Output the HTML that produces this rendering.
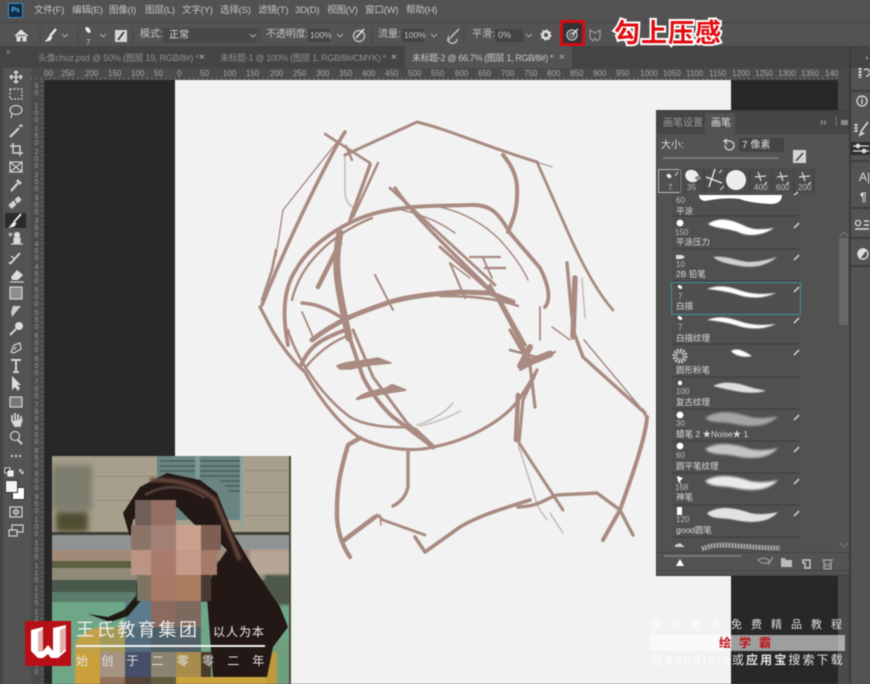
<!DOCTYPE html>
<html><head><meta charset="utf-8"><style>
html,body{margin:0;padding:0;background:#535353}
#p{position:relative;width:870px;height:684px;overflow:hidden;background:#535353;font-family:"Liberation Sans","Noto Sans CJK SC",sans-serif;color:#c4c4c4;font-size:10px;filter:blur(.4px)}
#p div,#p span.a,#p svg{position:absolute}
.t{position:absolute;white-space:nowrap;line-height:12px}
.m{position:absolute;white-space:nowrap;line-height:12px;top:5px;font-size:9.6px;letter-spacing:-.25px}
.tb{position:absolute;white-space:nowrap;line-height:12px;top:52px;font-size:9px}
.r{position:absolute;top:69px;font-size:8px;line-height:10px;color:#a8a8a8;white-space:nowrap}
.v{position:absolute;left:33px;width:7px;font-size:7px;line-height:7px;color:#a0a0a0;text-align:center}
.l{position:absolute;font-size:8.5px;line-height:12px;color:#dadada;white-space:nowrap}
.n{position:absolute;font-size:8px;line-height:9px;color:#bdbdbd;white-space:nowrap}
.it{position:absolute;left:672px;width:128px;background:#505050;border-bottom:2px solid #454545;box-sizing:border-box}
</style></head><body><div id="p">

<!-- chrome bars -->
<div style="left:0;top:0;width:870px;height:22px;background:#525252"></div>
<div style="left:0;top:22px;width:870px;height:1px;background:#444"></div>
<div style="left:0;top:46px;width:870px;height:22px;background:#444"></div>
<div style="left:405px;top:46px;width:167px;height:22px;background:#535353"></div>
<div style="left:31px;top:68px;width:807px;height:12px;background:#4b4b4b;background-image:repeating-linear-gradient(90deg,#6a6a6a 0 1px,transparent 1px 4.63px);background-size:100% 3px;background-repeat:no-repeat;background-position:0 9px"></div>
<div style="left:0;top:46px;width:3px;height:638px;background:#444"></div>
<div style="left:31px;top:80px;width:13px;height:604px;background:#4b4b4b;background-image:repeating-linear-gradient(0deg,#6a6a6a 0 1px,transparent 1px 4.63px);background-size:3px 100%;background-repeat:no-repeat;background-position:10px 0"></div>
<div style="left:44px;top:80px;width:131px;height:604px;background:#282828"></div>
<div style="left:731px;top:80px;width:107px;height:604px;background:#282828"></div>
<div style="left:175px;top:80px;width:556px;height:604px;background:#f2f2f2"></div>
<div style="left:838px;top:68px;width:12px;height:616px;background:#4a4a4a"></div>
<div style="left:849px;top:46px;width:2px;height:638px;background:#3a3a3a"></div>

<!-- menu -->
<div style="left:8px;top:3px;width:15px;height:15px;background:#0d2c44;border:1px solid #3e8fc4;box-sizing:border-box;color:#5fb6ec;font-size:7px;line-height:13px;text-align:center;font-weight:bold">Ps</div>
<span class="m" style="left:34px">文件(F)</span>
<span class="m" style="left:72px">编辑(E)</span>
<span class="m" style="left:109px">图像(I)</span>
<span class="m" style="left:145px">图层(L)</span>
<span class="m" style="left:182px">文字(Y)</span>
<span class="m" style="left:220px">选择(S)</span>
<span class="m" style="left:258px">滤镜(T)</span>
<span class="m" style="left:295px">3D(D)</span>
<span class="m" style="left:327px">视图(V)</span>
<span class="m" style="left:365px">窗口(W)</span>
<span class="m" style="left:406px">帮助(H)</span>

<!-- options -->
<div style="left:163px;top:28px;width:94px;height:15px;background:#484848"></div>
<div style="left:308px;top:29px;width:22px;height:13px;background:#444"></div>
<div style="left:402px;top:29px;width:22px;height:13px;background:#444"></div>
<div style="left:495px;top:29px;width:28px;height:13px;background:#444"></div>
<span class="t" style="left:140px;top:29px">模式:</span>
<span class="t" style="left:169px;top:30px;color:#ddd">正常</span>
<span class="t" style="left:266px;top:29px;letter-spacing:-.1px">不透明度:</span>
<span class="t" style="left:310px;top:29px;font-size:8.5px">100%</span>
<span class="t" style="left:378px;top:29px">流量:</span>
<span class="t" style="left:404px;top:29px;font-size:8.5px">100%</span>
<span class="t" style="left:472px;top:29px">平滑:</span>
<span class="t" style="left:498px;top:29px;font-size:9px">0%</span>
<span class="t" style="left:86px;top:37px;font-size:8px">7</span>
<div style="left:560px;top:20px;width:25px;height:26px;border:3px solid #d40c12;box-sizing:border-box;background:#333"></div>
<span class="t" style="left:614px;top:19px;font-size:26px;line-height:28px;font-weight:bold;color:#e00d12;-webkit-text-stroke:4px #fff;paint-order:stroke fill;letter-spacing:1px">勾上压感</span>

<svg style="left:0;top:0" width="870" height="50" fill="none" stroke="#c8c8c8" stroke-width="1">
<path d="M15 36 21 30 28 36M17 35V41H20V37H23V41H26V35" fill="#ddd" stroke="#ddd"/>
<path d="M40 27V44M78 27V44M133 27V44M260 27V44M372 27V44M464 27V44" stroke="#454545"/>
<path d="M56 29 50 36" stroke="#eee" stroke-width="2.4"/><path d="M50 36 46 41 50 40 52 37" fill="#eee" stroke="#eee"/>
<path d="M62 34 65 37 68 34M100 34 103 37 106 34M250 34 253 37 256 34M337 34 340 37 343 34M431 34 434 37 437 34M526 34 529 37 532 34" stroke="#aaa"/>
<ellipse cx="88" cy="30" rx="2" ry="3.4" fill="#eee" stroke="none" transform="rotate(-40 88 30)"/>
<rect x="115" y="30" width="12" height="12" fill="#d6d6d6" stroke="none"/><path d="M124 32 118 40" stroke="#333" stroke-width="1.6"/>
<circle cx="359" cy="36" r="5.5" stroke="#bbb" stroke-width="1.4"/><path d="M356 38 364 29" stroke="#eee" stroke-width="1.4"/>
<path d="M449 36A4.5 4.5 0 1 0 457 39M451 37 459 29" stroke="#ccc" stroke-width="1.3"/><path d="M447 41 452 37" stroke="#ccc"/>
<circle cx="546" cy="35" r="3.4" stroke="#e2e2e2" stroke-width="2.4"/><circle cx="546" cy="35" r="5" stroke="#e2e2e2" stroke-width="1" stroke-dasharray="2 1.9"/>
<circle cx="572" cy="35" r="5" stroke="#d0d0d0" stroke-width="1.2"/><circle cx="572" cy="35" r="2.4" stroke="#d0d0d0"/><path d="M572 35 578 29" stroke="#fff" stroke-width="1.2"/>
<path d="M595 33 590 30V38L593 41 595 38 597 41 600 38V30Z" stroke="#aaa"/>
</svg>

<!-- tabs -->
<span class="t" style="left:6px;top:46px;font-size:8px;color:#aaa">»</span>
<span class="tb" style="left:38px;color:#8f8f8f;letter-spacing:-.22px">头像chuz.psd @ 50% (图层 19, RGB/8#) *</span>
<span class="t" style="left:199px;top:52px;color:#c4c4c4">×</span>
<span class="tb" style="left:220px;color:#8f8f8f;letter-spacing:-.35px">未标题-1 @ 100% (图层 1, RGB/8#/CMYK) *</span>
<span class="t" style="left:391px;top:52px;color:#c4c4c4">×</span>
<span class="tb" style="left:412px;color:#c8c8c8;letter-spacing:-.35px">未标题-2 @ 66.7% (图层 1, RGB/8#) *</span>
<span class="t" style="left:559px;top:52px;color:#bbb">×</span>

<!-- top ruler -->
<span class="r" style="left:44px">00</span><span class="r" style="left:61px">250</span><span class="r" style="left:85px">200</span><span class="r" style="left:108px">150</span><span class="r" style="left:131px">100</span><span class="r" style="left:154px">50</span><span class="r" style="left:177px">0</span><span class="r" style="left:200px">50</span><span class="r" style="left:223px">100</span><span class="r" style="left:246px">150</span><span class="r" style="left:270px">200</span><span class="r" style="left:293px">250</span><span class="r" style="left:316px">300</span><span class="r" style="left:339px">350</span><span class="r" style="left:362px">400</span><span class="r" style="left:385px">450</span><span class="r" style="left:408px">500</span><span class="r" style="left:431px">550</span><span class="r" style="left:455px">600</span><span class="r" style="left:478px">650</span><span class="r" style="left:501px">700</span><span class="r" style="left:524px">750</span><span class="r" style="left:547px">800</span><span class="r" style="left:570px">850</span><span class="r" style="left:593px">900</span><span class="r" style="left:616px">950</span><span class="r" style="left:640px">1000</span><span class="r" style="left:663px">1050</span><span class="r" style="left:686px">1100</span><span class="r" style="left:709px">1150</span><span class="r" style="left:732px">1200</span><span class="r" style="left:755px">1250</span><span class="r" style="left:778px">1300</span><span class="r" style="left:801px">1350</span><span class="r" style="left:825px">140</span>

<!-- left ruler -->
<span class="v" style="top:83px">5<br>0</span><span class="v" style="top:103px">1<br>0<br>0</span><span class="v" style="top:126px">1<br>5<br>0</span><span class="v" style="top:149px">2<br>0<br>0</span><span class="v" style="top:172px">2<br>5<br>0</span><span class="v" style="top:195px">3<br>0<br>0</span><span class="v" style="top:218px">3<br>5<br>0</span><span class="v" style="top:241px">4<br>0<br>0</span><span class="v" style="top:264px">4<br>5<br>0</span><span class="v" style="top:287px">5<br>0<br>0</span><span class="v" style="top:310px">5<br>5<br>0</span><span class="v" style="top:333px">6<br>0<br>0</span><span class="v" style="top:356px">6<br>5<br>0</span><span class="v" style="top:379px">7<br>0<br>0</span><span class="v" style="top:402px">7<br>5<br>0</span><span class="v" style="top:425px">8<br>0<br>0</span><span class="v" style="top:448px">8<br>5<br>0</span><span class="v" style="top:471px">9<br>0<br>0</span><span class="v" style="top:494px">9<br>5<br>0</span><span class="v" style="top:517px">1<br>0<br>0</span><span class="v" style="top:540px">1<br>0<br>5</span><span class="v" style="top:563px">1<br>1<br>0</span><span class="v" style="top:586px">1<br>1<br>5</span><span class="v" style="top:609px">1<br>2<br>0</span><span class="v" style="top:632px">1<br>2<br>5</span><span class="v" style="top:655px">1<br>3<br>0</span>

<!-- tools -->
<div style="left:5px;top:213px;width:21px;height:15px;background:#2b2b2b"></div>
<svg style="left:0;top:60px" width="31" height="490" viewBox="0 60 31 490" fill="none" stroke="#d4d4d4" stroke-width="1.2">
<path d="M16 71V83M10 77H22M16 71 14 73M16 71 18 73M16 83 14 81M16 83 18 81M10 77 12 75M10 77 12 79M22 77 20 75M22 77 20 79" stroke-width="1.6"/>
<rect x="10" y="89" width="12" height="10" stroke-dasharray="2 1.5"/>
<ellipse cx="16" cy="110" rx="6" ry="4.5"/><path d="M12 114 11 118"/>
<path d="M10 137 19 128" stroke-width="2.2"/><path d="M21 124V127M19 126H23" />
<path d="M13 143V153H23M10 146H20V156" stroke-width="1.5"/>
<rect x="10" y="162" width="12" height="10"/><path d="M10 162 22 172M22 162 10 172"/>
<path d="M11 191 18 183" stroke-width="2.2"/><path d="M17 180 21 184" stroke-width="2.6"/>
<path d="M10 207 20 198" stroke-width="5"/><path d="M13 198 18 206" stroke="#555"/>
<path d="M21 214 14 222" stroke="#eee" stroke-width="1.8"/><path d="M14 222 10 227 14 226 16 223" fill="#eee" stroke="#eee"/>
<circle cx="17" cy="235" r="2.5" fill="#ddd"/><path d="M14 243H20V238H14ZM11 244H23" fill="#ddd"/><path d="M9 233 12 236M12 233 9 236"/>
<path d="M10 264 20 253" stroke-width="2"/><path d="M11 256 15 259M9 262 10 264" />
<path d="M11 277 17 270 23 275 18 280H12Z" fill="#ddd" stroke="none"/><path d="M10 282H24"/>
<rect x="10" y="287" width="12" height="12" fill="#8f8f8f"/>
<path d="M12 317 21 306 13 306 11 312Z" fill="#ccc" stroke="none"/>
<circle cx="19" cy="326" r="4" fill="#ddd" stroke="none"/><path d="M16 329 10 335" stroke-width="2"/>
<path d="M11 352 14 345 20 343 21 349 14 353ZM16 347 14 350"/>
<path d="M11 360H21M16 360V372M13 372H19" stroke-width="2"/>
<path d="M12 376V390L15 387 18 391 20 388 17 385H21Z" fill="#ddd" stroke="none"/>
<rect x="10" y="397" width="12" height="10" fill="#777"/>
<path d="M12 421V415M15 420V413M18 420V414M21 421V416M12 421 15 426H20L22 419" stroke-width="1.8" fill="#ddd"/>
<circle cx="15" cy="436" r="4.5"/><path d="M18 440 22 444" stroke-width="2"/>
<path d="M11 456H13M15 456H17M19 456H21" stroke-width="2"/>
<rect x="5" y="468" width="5" height="5" fill="#222" stroke="#ccc"/><rect x="8" y="471" width="5" height="5" fill="#eee" stroke="#eee"/>
<path d="M19 470 23 474M19 470H22M23 474V471"/>
<rect x="10" y="507" width="12" height="10"/><circle cx="16" cy="512" r="2.4" fill="#888"/>
<rect x="12" y="525" width="11" height="7"/><rect x="9" y="530" width="8" height="6" fill="#535353"/>
</svg>
<div style="left:12px;top:487px;width:13px;height:13px;background:#fff;border:1px solid #333;box-sizing:border-box"></div>
<div style="left:5px;top:480px;width:13px;height:13px;background:#f4f4f4;border:1px solid #333;box-sizing:border-box"></div>

<!-- sketch -->
<svg style="left:175px;top:80px" width="556" height="604" viewBox="175 80 556 604" fill="none" stroke="#a98b81" stroke-width="3" stroke-linecap="round" stroke-linejoin="round">
<g stroke="#c2bcb9" stroke-width="1.5">
<path d="M345 156V193Q346 204 353 207"/><path d="M582 278 585 318"/>
<path d="M520 450 538 507 547 520M550 513 563 533M517 400 519 450"/>
<path d="M417 425Q440 418 453 403M420 426Q445 420 460 411"/>
</g>
<path d="M345 132C330 155 290 235 262 305" stroke-width="3.6"/>
<path d="M345 132 283 210 276 256" stroke-width="1.4"/><path d="M276 250 272 270 262 300" stroke-width="2.6"/>
<path d="M325 134 370 163" stroke-width="2.6"/>
<path d="M345 155 417 122C450 130 490 148 537 162" stroke-width="3"/><path d="M537 162 552 167" stroke-width="1"/>
<path d="M346 146 352 160" stroke-width="2.4"/>
<path d="M378 163 353 217" stroke-width="2.6"/><path d="M370 165 350 220" stroke-width="3.4"/>
<path d="M503 155C514 168 518 180 517 195 517 212 512 222 508 232" stroke-width="4"/>
<path d="M537 162 567 230C578 255 595 290 613 310" stroke-width="2.8"/>
<path d="M260 307 272 330C285 352 297 365 305 372 320 400 340 425 360 438 385 450 415 452 433 447 470 440 505 420 520 398 528 385 535 375 537 370" stroke-width="3.2"/>
<path d="M288 345C281 310 285 285 297 268 310 245 345 220 380 212 410 205 440 206 470 205 490 204 498 212 510 233L540 268C549 285 551 300 545 307" stroke-width="3.8"/>
<path d="M292 300C300 265 330 235 372 218" stroke-width="2.4"/>
<path d="M288 330C295 355 320 395 350 417 365 426 390 428 412 427" stroke-width="2.6"/>
<path d="M300 367C310 345 320 340 345 330" stroke-width="4"/><path d="M305 368C320 350 335 340 350 335" stroke-width="2.4"/>
<path d="M312 340C340 318 367 310 390 302 410 296 440 293 460 292L490 293 513 302" stroke-width="5"/>
<path d="M440 296C470 296 495 298 518 306" stroke-width="2.4"/>
<path d="M302 303C318 304 330 310 342 318" stroke-width="3.4"/><path d="M318 287 340 243" stroke-width="4.6"/>
<path d="M340 233C333 265 339 290 343 310L349 338" stroke-width="7"/>
<path d="M347 330 363 377C372 395 385 410 393 417L433 447" stroke-width="4"/><path d="M353 330 373 377 407 423 433 446" stroke-width="3"/>
<path d="M415 430 433 447" stroke-width="5"/>
<path d="M337 366Q345 362 360 361L378 358 391 363 370 365 350 369 340 369Z" fill="#a98b81" stroke-width="1.6"/>
<path d="M357 399Q365 392 385 389L392 385 405 390 385 393 370 396Z" fill="#a98b81" stroke-width="2.4"/>
<path d="M390 188 495 285" stroke-width="2.8"/><path d="M395 188C420 225 470 268 500 300L525 345" stroke-width="3.4"/><path d="M440 247 500 300 520 340" stroke-width="3"/><path d="M490 285 530 360" stroke-width="3"/>
<path d="M510 330 530 365 535 407" stroke-width="3.2"/>
<path d="M525 364 550 354" stroke-width="7"/><path d="M530 347 520 366" stroke-width="6"/><path d="M520 370 555 352" stroke-width="2.2"/><path d="M510 350 540 358" stroke-width="2.6"/>
<path d="M567 263 572 317" stroke-width="3.4"/><path d="M575 278 573 337" stroke-width="5.5"/><path d="M573 330 583 357 645 413" stroke-width="3.4"/>
<path d="M535 375 523 400 519 443 563 510" stroke-width="3"/><path d="M518 395 516 440" stroke-width="4.6"/>
<path d="M647 417C646 440 625 495 620 510L603 540" stroke-width="4"/><path d="M643 410 647 418" stroke-width="3"/>
<path d="M518 507C540 506 545 499 557 495L597 493 620 510 633 535" stroke-width="3.4"/>
<path d="M360 438 348 445C339 475 337 490 337 510 336 530 343 547 350 557" stroke-width="4.4"/>
<path d="M343 541 375 517" stroke-width="4.6"/><path d="M377 515 383 520 425 535" stroke-width="2.8"/>
<path d="M408 452V487Q405 500 393 506" stroke-width="3.4"/>
<path d="M415 537 425 552 460 527C480 515 505 508 530 500" stroke-width="3.6"/>
<g stroke-width="1.5">
<path d="M393 208Q430 215 455 233"/><path d="M375 275 393 310" stroke-width="2"/><path d="M302 312 313 337" stroke-width="1.8"/>
<path d="M440 207Q475 215 500 240 520 262 528 280"/>
<path d="M470 257H500" stroke-width="2.2"/><path d="M483 258 492 278" stroke-width="2"/><path d="M485 268H505" stroke-width="2.6"/>
<path d="M450 263 465 298" stroke-width="2.2"/><path d="M450 263 470 278"/>
<path d="M540 307V340" stroke-width="1.8"/><path d="M552 327 570 340"/>
<path d="M584 340 645 413"/>
<path d="M380 515 381 525"/>
</g>
</svg>

<!-- brush panel -->
<div style="left:656px;top:110px;width:194px;height:466px;background:#535353;border:1px solid #3d3d3d;box-sizing:border-box"></div>
<div style="left:657px;top:111px;width:192px;height:23px;background:#454545"></div>
<div style="left:705px;top:113px;width:30px;height:21px;background:#535353"></div>
<span class="t" style="left:663px;top:118px;color:#9a9a9a">画笔设置</span>
<span class="t" style="left:711px;top:118px;color:#e0e0e0">画笔</span>
<span class="t" style="left:820px;top:117px;color:#ccc">››</span>
<span class="t" style="left:835px;top:116px;color:#888">|</span>
<div style="left:841px;top:120px;width:7px;height:5px;background:#8a8a8a"></div>
<span class="t" style="left:661px;top:140px;color:#ddd">大小:</span>
<div style="left:739px;top:138px;width:45px;height:14px;background:#444"></div>
<span class="t" style="left:742px;top:140px;color:#ddd;font-size:10px">7 像素</span>
<div style="left:663px;top:157px;width:115px;height:2px;background:#777"></div>
<div style="left:793px;top:150px;width:13px;height:13px;background:#d4d4d4"></div>

<div style="left:657px;top:168px;width:158px;height:25px;background:#4c4c4c"></div>
<div style="left:658px;top:169px;width:23px;height:24px;border:1px solid #bbb;box-sizing:border-box;background:#505050"></div>
<div style="left:680px;top:169px;width:1px;height:24px;background:#bbb"></div>
<svg style="left:657px;top:168px" width="160" height="26" viewBox="657 168 160 26" fill="#eee" stroke="none">
<path d="M704 169V193M726 169V193M750 169V193M772 169V193M794 169V193M814 169V193M680 169V193" stroke="#3f3f3f"/>
<ellipse cx="669" cy="176" rx="2.6" ry="1.8" transform="rotate(35 669 176)"/><path d="M675 176 678 172" stroke="#ddd"/>
<ellipse cx="692" cy="176" rx="7" ry="6" transform="rotate(30 692 176)"/><ellipse cx="698" cy="178" rx="3" ry="2" fill="#888"/>
<path d="M709 187 715 169M706 177 722 183" stroke="#eee" stroke-width="1.3"/><path d="M719 173 722 170M720 190 724 186" stroke="#ddd"/>
<circle cx="736" cy="180" r="10" />
<path d="M758 172 761 181M755 177 766 176M767 182 764 185" stroke="#ddd" stroke-width="1.2"/>
<path d="M780 172 783 181M777 177 788 176M789 182 786 185" stroke="#ddd" stroke-width="1.2"/>
<path d="M802 172 805 181M799 177 810 176M811 182 808 185" stroke="#ddd" stroke-width="1.2"/>
</svg>
<span class="n" style="left:668px;top:183px">7</span><span class="n" style="left:687px;top:183px">35</span><span class="n" style="left:754px;top:183px">400</span><span class="n" style="left:776px;top:183px">600</span><span class="n" style="left:798px;top:183px">200</span>

<!-- list -->
<div style="left:657px;top:193px;width:182px;height:359px;background:#525252"></div>
<div class="it" style="top:193px;height:24px"></div>
<div class="it" style="top:217px;height:33px"></div>
<div class="it" style="top:250px;height:32px"></div>
<div class="it" style="top:314px;height:31px"></div>
<div class="it" style="top:345px;height:33px"></div>
<div class="it" style="top:378px;height:32px"></div>
<div class="it" style="top:410px;height:32px"></div>
<div class="it" style="top:442px;height:32px"></div>
<div class="it" style="top:474px;height:32px"></div>
<div class="it" style="top:506px;height:32px"></div>
<div class="it" style="top:538px;height:14px;border:0"></div>
<div style="left:671px;top:282px;width:130px;height:33px;background:#4f4f4f;border:1px solid #3f93a6;box-sizing:border-box"></div>
<div style="left:839px;top:238px;width:9px;height:87px;background:#686868"></div>
<span class="n" style="left:676px;top:196px">60</span><span class="l" style="left:676px;top:205px">平涂</span>
<span class="n" style="left:675px;top:228px">150</span><span class="l" style="left:676px;top:236px">平涂压力</span>
<span class="n" style="left:676px;top:260px">10</span><span class="l" style="left:676px;top:268px">2B 铅笔</span>
<span class="n" style="left:678px;top:292px">7</span><span class="l" style="left:676px;top:300px">白描</span>
<span class="n" style="left:678px;top:323px">7</span><span class="l" style="left:676px;top:332px">白描纹理</span>
<span class="l" style="left:676px;top:364px">圆形粉笔</span>
<span class="n" style="left:676px;top:387px">100</span><span class="l" style="left:676px;top:396px">复古纹理</span>
<span class="n" style="left:676px;top:419px">30</span><span class="l" style="left:676px;top:428px">蜡笔 2 ★Noise★ 1</span>
<span class="n" style="left:676px;top:451px">60</span><span class="l" style="left:676px;top:460px">圆平笔纹理</span>
<span class="n" style="left:675px;top:483px">168</span><span class="l" style="left:676px;top:491px">神笔</span>
<span class="n" style="left:676px;top:515px">120</span><span class="l" style="left:676px;top:524px">good圆笔</span>

<svg style="left:657px;top:190px" width="192" height="385" viewBox="657 190 192 385" fill="#fff" stroke="none">
<defs><filter id="b1" x="-10%" y="-30%" width="120%" height="160%"><feGaussianBlur stdDeviation=".6"/></filter>
<filter id="b2" x="-10%" y="-30%" width="120%" height="160%"><feGaussianBlur stdDeviation="1.1"/></filter></defs>
<g stroke="#e0e0e0" stroke-width="1.4">
<path d="M794 228 799 223M794 260 799 255M794 292 799 287M794 323 799 318M794 355 799 350M794 420 799 415M794 452 799 447M794 484 799 479M794 516 799 511M794 195 798 192"/>
</g>
<circle cx="680" cy="223" r="3.4"/><path d="M676 255H682L685 257 682 259H676Z" fill="#ddd"/><ellipse cx="680" cy="287" rx="2.4" ry="1.6" transform="rotate(35 680 287)"/><ellipse cx="680" cy="318" rx="2.4" ry="1.6" transform="rotate(35 680 318)"/>
<circle cx="680" cy="356" r="5" fill="none" stroke="#c4c4c4" stroke-width="5" stroke-dasharray="1.6 1"/><circle cx="680" cy="383" r="2.2"/><circle cx="680" cy="415" r="3.4"/><circle cx="680" cy="446" r="3.4"/><path d="M677 476 683 478 680 481 681 485 678 481Z"/><rect x="677" y="507" width="5" height="8"/>
<path d="M675 545 680 543 685 547H675Z" fill="#ccc"/>
<path d="M699 195H782Q782 204 770 204 750 203 740 199 725 197 705 201 699 200 699 195Z"/>
<path filter="url(#b1)" d="M708 224C720 216 732 220 745 226 755 231 765 229 774 228 762 236 748 237 738 232 727 228 716 229 708 224Z"/>
<path filter="url(#b1)" fill="#cfcfcf" d="M713 257C725 255 738 261 748 262 758 262 767 260 777 257 765 267 752 268 740 266 730 264 720 263 713 257Z"/>
<path filter="url(#b1)" d="M707 289C720 284 730 287 742 291 755 295 765 294 776 293 762 299 752 298 742 296 730 292 718 290 707 289Z"/>
<path filter="url(#b1)" d="M707 320C720 315 730 318 742 322 755 326 765 325 776 324 762 330 752 329 742 327 730 323 718 321 707 320Z"/>
<path filter="url(#b1)" d="M731 351C738 347 745 352 752 356 745 358 735 356 731 351Z"/>
<path filter="url(#b1)" fill="#dedede" d="M713 386C725 380 738 383 750 387 755 389 760 389 766 391 750 395 735 391 725 389Z"/>
<path filter="url(#b2)" fill="#a4a4a4" d="M705 418C718 409 735 412 750 417 760 419 770 418 778 416 768 428 748 427 735 424 722 421 712 424 705 418Z"/>
<path filter="url(#b2)" fill="#c4c4c4" d="M705 449C718 441 735 444 750 449 760 451 770 450 778 448 768 460 748 459 735 456 722 453 712 456 705 449Z"/>
<path filter="url(#b2)" fill="#eaeaea" d="M705 481C718 473 735 476 750 481 760 483 770 482 778 480 768 492 748 491 735 488 722 485 712 488 705 481Z"/>
<path filter="url(#b1)" fill="#e2e2e2" d="M707 513C720 505 735 508 750 513 760 515 770 514 778 512 768 524 748 523 735 520 722 517 712 520 707 513Z"/>
<path fill="none" stroke="#a8a8a8" stroke-width="5" stroke-dasharray="2 1" d="M702 549C720 541 740 548 780 548"/>
<path d="M840 236 844 232 848 236M840 543 844 547 848 543" fill="none" stroke="#777"/>
<path d="M665 167 668 160 672 167Z" transform="translate(-1 -2)"/>
<path d="M664 556H742" stroke="#777" stroke-width="2"/>
<path d="M676 566 680 559 684 566Z"/>
<path d="M758 560Q764 556 770 561 764 566 758 560ZM773 557 768 565" fill="none" stroke="#999" stroke-width="1.2"/>
<path d="M781 558H785L786 560H792V567H781Z" fill="#bbb"/>
<path d="M803 560H810V568H805V563H803Z" fill="none" stroke="#ccc" stroke-width="1.4"/>
<path d="M822 560H833M824 561V569H831V561M826 563V567M829 563V567" fill="none" stroke="#aaa" stroke-width="1.2"/>
</svg>
<svg style="left:720px;top:136px" width="90" height="30" viewBox="720 136 90 30" fill="none">
<path d="M725 145A4.5 4.5 0 1 0 729 141H725M727 139 724 141 727 144" stroke="#ddd" stroke-width="1.2"/>
<path d="M803 153 796 161" stroke="#444" stroke-width="1.6"/>
</svg>
<div style="left:657px;top:570px;width:192px;height:1px;background:#444"></div>
<div style="left:657px;top:552px;width:192px;height:1px;background:#444"></div>

<!-- right dock -->
<div style="left:851px;top:160px;width:19px;height:2px;background:#3d3d3d"></div>
<div style="left:851px;top:90px;width:19px;height:2px;background:#3d3d3d"></div>
<div style="left:851px;top:207px;width:19px;height:2px;background:#3d3d3d"></div>
<div style="left:851px;top:237px;width:19px;height:2px;background:#3d3d3d"></div>
<div style="left:851px;top:265px;width:19px;height:2px;background:#3d3d3d"></div>
<div style="left:851px;top:142px;width:19px;height:13px;background:#2e2e2e"></div>
<svg style="left:851px;top:55px" width="19" height="215" viewBox="851 55 19 215" fill="none" stroke="#ddd" stroke-width="1.3">
<path d="M868 53 866 55M868 59 866 57" stroke="#aaa"/>
<path d="M860 68V78" stroke-width="3" stroke-dasharray="2 1"/><path d="M864 70A3.5 3.5 0 1 1 866 76" />
<circle cx="862" cy="101" r="5"/><path d="M862 99V104M862 97V98"/>
<path d="M856 124V132" stroke-width="3" stroke-dasharray="2 1"/><path d="M868 122 862 130M862 130 860 135 864 133" stroke-width="1.6"/>
<path d="M853 146H869M853 151H869" /><circle cx="858" cy="146" r="1.7" fill="#ddd"/><circle cx="864" cy="151" r="1.7" fill="#ddd"/>
<circle cx="858" cy="223" r="2.6"/><path d="M864 221H869M864 225H869M855 229H869" stroke-width="1.6"/>
<circle cx="863" cy="254" r="5" fill="#535353" stroke-width="1.4"/><path d="M860 258 866 250A5 5 0 0 0 858 254Z" fill="#ddd"/>
</svg>
<span class="t" style="left:859px;top:171px;color:#ddd;font-size:12px">A|</span>
<span class="t" style="left:860px;top:191px;color:#ddd;font-size:12px;font-weight:bold">¶</span>

<!-- photo -->
<svg style="left:52px;top:456px" width="239" height="228" viewBox="52 456 239 228">
<defs><filter id="b3"><feGaussianBlur stdDeviation="1.2"/></filter><filter id="b4"><feGaussianBlur stdDeviation="3"/></filter></defs>
<rect x="52" y="456" width="239" height="228" fill="#a69f8b"/>
<g fill="#8f8a78"><rect x="52" y="456" width="110" height="2" opacity=".5"/><rect x="95" y="476" width="60" height="1"/><rect x="95" y="500" width="40" height="1"/><rect x="245" y="470" width="45" height="1"/><rect x="245" y="492" width="45" height="1"/><rect x="245" y="515" width="45" height="1"/></g>
<rect x="157" y="456" width="86" height="64" fill="#6a8581"/>
<g stroke="#41574f" stroke-width="1.2"><path d="M160 461H195M160 466H195M160 471H195M200 461H240M200 466H240M200 471H240M200 476H240M220 481H240M225 486H240M228 491H240"/></g>
<rect x="195" y="456" width="5" height="50" fill="#7a9b96"/><rect x="240" y="456" width="3" height="70" fill="#8aa3a0"/>
<g filter="url(#b4)"><rect x="52" y="465" width="40" height="45" fill="#7d7e6e"/><rect x="56" y="512" width="32" height="20" fill="#4f4d32"/></g>
<rect x="52" y="534" width="239" height="16" fill="#8f9492"/><rect x="52" y="532" width="239" height="3" fill="#3f4136"/>
<rect x="52" y="550" width="239" height="12" fill="#a28a78"/>
<rect x="52" y="561" width="239" height="7" fill="#5e5f42"/>
<rect x="52" y="568" width="239" height="12" fill="#8f8b78"/>
<rect x="52" y="580" width="239" height="22" fill="#48594c"/>
<rect x="52" y="592" width="100" height="10" fill="#5a7d6c"/>
<rect x="52" y="602" width="239" height="82" fill="#6fa688"/>
<rect x="250" y="550" width="41" height="25" fill="#b6a695" filter="url(#b3)"/>
<rect x="265" y="575" width="26" height="30" fill="#4e5948" filter="url(#b3)"/>
<path d="M75 684V645Q78 632 100 627V684Z" fill="#c2a04a"/>
<rect x="270" y="640" width="21" height="44" fill="#6f9f7d"/>
<rect x="262" y="652" width="15" height="32" fill="#bf9a3a"/>
<g>
<rect x="125" y="601" width="26" height="26" fill="#5c7b8c"/><rect x="151" y="601" width="25" height="26" fill="#8b6b60"/><rect x="176" y="601" width="25" height="26" fill="#7d6a5e"/>
<rect x="100" y="627" width="25" height="25" fill="#a59a55"/><rect x="125" y="627" width="26" height="25" fill="#536c7c"/><rect x="151" y="627" width="25" height="25" fill="#4e5f68"/><rect x="176" y="627" width="25" height="25" fill="#52606a"/>
<rect x="75" y="652" width="25" height="25" fill="#c9a03c"/><rect x="100" y="652" width="25" height="25" fill="#a39380"/><rect x="125" y="652" width="26" height="25" fill="#454f69"/><rect x="151" y="652" width="25" height="25" fill="#8c8270"/><rect x="176" y="652" width="25" height="25" fill="#a88c4c"/><rect x="201" y="652" width="10" height="25" fill="#4a3a28"/>
<rect x="75" y="677" width="25" height="7" fill="#c9a03c"/><rect x="100" y="677" width="25" height="7" fill="#927158"/><rect x="125" y="677" width="26" height="7" fill="#55443a"/><rect x="151" y="677" width="25" height="7" fill="#5f5c40"/><rect x="176" y="677" width="90" height="7" fill="#c9a43a"/>
</g>
<path d="M137 578 144 597 128 616 110 622 88 614 108 617 124 610 136 596Z" fill="#1d1a16"/>
<path d="M123 513 140 487 167 473 200 480 217 493 233 533 253 567 280 607 288 627 273 647 267 677H213L210 637 207 597 213 570 227 550 220 543 200 530 177 507H150L133 520 130 537Z" fill="#241816"/>
<path d="M150 480Q190 478 215 500 228 530 240 560" fill="none" stroke="#6a4a3e" stroke-width="4" filter="url(#b3)"/>
<path d="M145 495Q175 478 205 498" fill="none" stroke="#4d3a34" stroke-width="3"/>
<rect x="135" y="500" width="16" height="25" fill="#6f5f58"/><rect x="151" y="500" width="25" height="25" fill="#956d62"/>
<rect x="131" y="525" width="20" height="25" fill="#8d7468"/><rect x="151" y="525" width="25" height="25" fill="#a28073"/><rect x="176" y="525" width="25" height="25" fill="#c8a08d"/><rect x="201" y="525" width="20" height="25" fill="#7d5f54"/>
<rect x="131" y="550" width="20" height="25" fill="#bb9483"/><rect x="151" y="550" width="25" height="25" fill="#aa7c6d"/><rect x="176" y="550" width="25" height="25" fill="#c49a88"/><rect x="201" y="550" width="16" height="25" fill="#a57a68"/>
<rect x="137" y="575" width="14" height="26" fill="#7c7564"/><rect x="151" y="575" width="25" height="26" fill="#a77865"/><rect x="176" y="575" width="25" height="26" fill="#a97c60"/><rect x="201" y="575" width="10" height="26" fill="#473a30"/>
<rect x="289" y="456" width="2" height="228" fill="#4f4c3e"/>
</svg>
<div style="left:25px;top:621px;width:46px;height:45px;background:#b70f17"></div>
<svg style="left:25px;top:621px" width="46" height="45" viewBox="0 0 46 45" fill="#fff">
<path d="M6 9 18 6V30L23 24 28 30V7L41 4V30L33 37H26L23 33 18 37H13L6 30Z"/>
<path d="M18 8 13 11V31L18 30ZM41 6 35 9V33L41 28Z" fill="#e0b0b0"/>
</svg>
<span class="t" style="left:76px;top:620px;color:#eee;font-size:18px;line-height:20px;letter-spacing:2.6px">王氏教育集团</span>
<span class="t" style="left:213px;top:625px;color:#eee;font-size:12px;line-height:14px;letter-spacing:1px">以人为本</span>
<div style="left:76px;top:645px;width:189px;height:2px;background:#f4f4f4"></div>
<span class="t" style="left:76px;top:654px;color:#e6e6e6;font-size:12px;line-height:14px;letter-spacing:13.2px">始创于二零零二年</span>

<!-- watermark -->
<div style="left:650px;top:635px;width:195px;height:16px;background:rgba(255,255,255,.55)"></div>
<span class="t" style="left:651px;top:619px;color:rgba(255,255,255,.85);font-size:11px;line-height:13px;letter-spacing:9px">获得更多免费精品教程</span>
<span class="t" style="left:719px;top:637px;color:#c10d14;font-size:12px;line-height:13px;font-weight:bold;letter-spacing:8px">绘学霸</span>
<span class="t" style="left:651px;top:653px;color:rgba(255,255,255,.88);font-size:12px;line-height:14px;letter-spacing:2.1px;white-space:nowrap">在AppStore或<b>应用宝</b>搜索下载</span>

</div></body></html>
